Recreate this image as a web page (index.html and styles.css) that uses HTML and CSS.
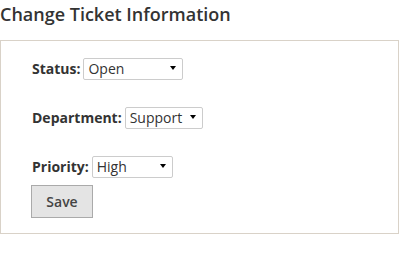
FILE: index.html
```html
<!DOCTYPE html>
<html lang="en">
<head>
  <meta charset="UTF-8">
  <title>Change Ticket Information</title>
  <link rel="stylesheet" href="styles.css">
</head>
<body>
  <h2>Change Ticket Information</h2>
  <form class="ticket-box">
    <div class="row">
      <label for="status">Status:</label>
      <span class="select-wrap" style="width: 100px">
        <select id="status">
          <option>Open</option>
          <option>Closed</option>
        </select>
      </span>
    </div>
    <div class="row">
      <label for="dept">Department:</label>
      <span class="select-wrap" style="width: 78px">
        <select id="dept">
          <option>Support</option>
          <option>Sales</option>
        </select>
      </span>
    </div>
    <div class="row last">
      <label for="priority">Priority:</label>
      <span class="select-wrap" style="width: 81px">
        <select id="priority">
          <option>High</option>
          <option>Medium</option>
          <option>Low</option>
        </select>
      </span>
    </div>
    <button type="button" class="save-btn">Save</button>
  </form>
</body>
</html>
```

FILE: styles.css
```css
* {
  box-sizing: border-box;
  margin: 0;
  padding: 0;
}

body {
  font-family: "Open Sans", sans-serif;
  color: #333;
  background: #fff;
  width: 420px;
}

h2 {
  font-size: 18px;
  font-weight: 600;
  color: #333;
  line-height: 28px;
  margin-bottom: 12px;
}

.ticket-box {
  width: 399px;
  border: 1px solid #d9d2c8;
  box-shadow: 0 2px 0 #e9e6e0;
  padding: 16px 0 15px 30px;
  display: flex;
  flex-direction: column;
  align-items: flex-start;
}

.row {
  display: flex;
  align-items: center;
  gap: 3px;
  height: 22px;
  margin-bottom: 27px;
}

.row.last {
  margin-bottom: 8px;
}

.row label {
  font-size: 14px;
  font-weight: 700;
  color: #333;
  padding-left: 1px;
}

.select-wrap {
  position: relative;
  display: inline-block;
  height: 22px;
}

.select-wrap select {
  appearance: none;
  -webkit-appearance: none;
  width: 100%;
  height: 22px;
  border: 1px solid #ccc;
  border-radius: 2px;
  background: #fff;
  font-family: "Open Sans", sans-serif;
  font-size: 14px;
  color: #333;
  padding: 0 0 0 4px;
  line-height: 20px;
}

.select-wrap::after {
  content: "";
  position: absolute;
  right: 7px;
  top: 9px;
  border-left: 3px solid transparent;
  border-right: 3px solid transparent;
  border-top: 4px solid #000;
  pointer-events: none;
}

.save-btn {
  width: 62px;
  height: 33px;
  background: #e4e4e4;
  border: 1px solid #aaa;
  font-family: "Open Sans", sans-serif;
  font-size: 14px;
  font-weight: 600;
  color: #444;
  cursor: pointer;
}
```
